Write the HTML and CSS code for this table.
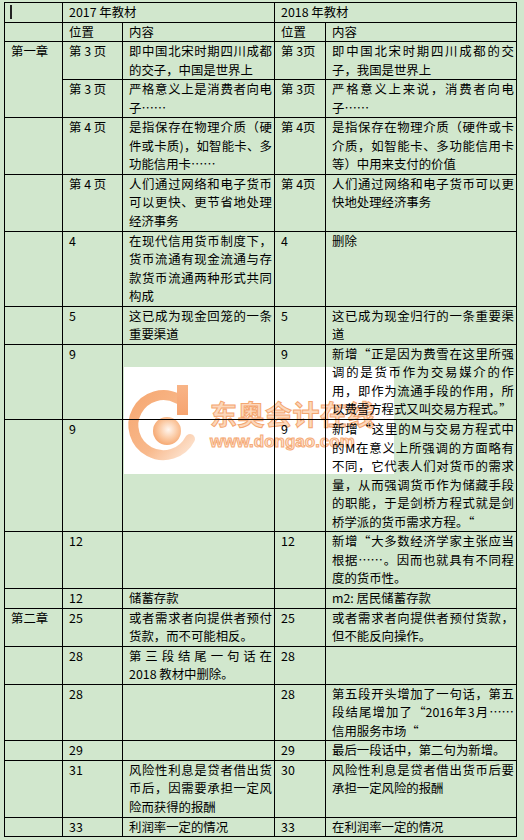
FILE: index.html
```html
<!DOCTYPE html>
<html lang="zh-CN">
<head>
<meta charset="utf-8">
<title>2017/2018 教材对比</title>
<link rel="stylesheet" href="styles.css">
</head>
<body>
<div class="page">
  <div class="watermark" aria-hidden="true">
    <svg width="270" height="107" viewBox="0 0 270 107">
      <defs>
        <linearGradient id="ring" x1="0" y1="0" x2="1" y2="1">
          <stop offset="0" stop-color="#f6a872"/>
          <stop offset="0.6" stop-color="#f8b98c"/>
          <stop offset="1" stop-color="#fde6d4"/>
        </linearGradient>
        <radialGradient id="ball" cx="0.55" cy="0.45" r="0.6">
          <stop offset="0" stop-color="#fff6ef"/>
          <stop offset="0.55" stop-color="#fbc9a2"/>
          <stop offset="1" stop-color="#f5a46c"/>
        </radialGradient>
        <linearGradient id="stem" x1="0" y1="0" x2="0" y2="1">
          <stop offset="0" stop-color="#f8b487"/>
          <stop offset="1" stop-color="#f6a470"/>
        </linearGradient>
      </defs>
      <path d="M 54 32 A 30 30 0 1 0 66 72" fill="none" stroke="url(#ring)" stroke-width="10" stroke-linecap="round"/>
      <rect x="53" y="18" width="11" height="30" fill="url(#stem)"/>
      <circle cx="43" cy="64" r="14" fill="url(#ball)"/>
      <text x="86" y="58" class="wm-cn">东奥会计在线</text>
      <text x="86" y="80" class="wm-en">www.dongao.com</text>
    </svg>
  </div>
  <table class="cmp">
    <colgroup>
      <col class="c-chap">
      <col class="c-pos">
      <col class="c-old">
      <col class="c-pos2">
      <col class="c-new">
    </colgroup>
    <tbody>
      <tr>
        <td><span class="caret"></span></td>
        <td colspan="2">2017 年教材</td>
        <td colspan="2">2018 年教材</td>
      </tr>
      <tr>
        <td></td>
        <td>位置</td>
        <td>内容</td>
        <td>位置</td>
        <td>内容</td>
      </tr>
      <tr>
        <td rowspan="2">第一章</td>
        <td>第 3 页</td>
        <td>即中国北宋时期四川成都的交子，中国是世界上</td>
        <td>第 3页</td>
        <td>即中国北宋时期四川成都的交子，我国是世界上</td>
      </tr>
      <tr>
        <td>第 3 页</td>
        <td>严格意义上是消费者向电子……</td>
        <td>第 3页</td>
        <td>严格意义上来说，消费者向电子……</td>
      </tr>
      <tr>
        <td></td>
        <td>第 4 页</td>
        <td>是指保存在物理介质（硬件或卡质)，如智能卡、多功能信用卡……</td>
        <td>第 4页</td>
        <td>是指保存在物理介质（硬件或卡介质，如智能卡、多功能信用卡等）中用来支付的价值</td>
      </tr>
      <tr>
        <td></td>
        <td>第 4 页</td>
        <td>人们通过网络和电子货币可以更快、更节省地处理经济事务</td>
        <td>第 4页</td>
        <td>人们通过网络和电子货币可以更快地处理经济事务</td>
      </tr>
      <tr>
        <td></td>
        <td>4</td>
        <td>在现代信用货币制度下，货币流通有现金流通与存款货币流通两种形式共同构成</td>
        <td>4</td>
        <td>删除</td>
      </tr>
      <tr>
        <td></td>
        <td>5</td>
        <td>这已成为现金回笼的一条重要渠道</td>
        <td>5</td>
        <td>这已成为现金归行的一条重要渠道</td>
      </tr>
      <tr>
        <td></td>
        <td>9</td>
        <td></td>
        <td>9</td>
        <td>新增“正是因为费雪在这里所强调的是货币作为交易媒介的作用，即作为流通手段的作用，所以费雪方程式又叫交易方程式。”</td>
      </tr>
      <tr>
        <td></td>
        <td>9</td>
        <td></td>
        <td>9</td>
        <td>新增“这里的M与交易方程式中的M在意义上所强调的方面略有不同，它代表人们对货币的需求量，从而强调货币作为储藏手段的职能，于是剑桥方程式就是剑桥学派的货币需求方程。“</td>
      </tr>
      <tr>
        <td></td>
        <td>12</td>
        <td></td>
        <td>12</td>
        <td>新增“大多数经济学家主张应当根据……。因而也就具有不同程度的货币性。</td>
      </tr>
      <tr>
        <td></td>
        <td>12</td>
        <td>储蓄存款</td>
        <td></td>
        <td>m2: 居民储蓄存款</td>
      </tr>
      <tr>
        <td>第二章</td>
        <td>25</td>
        <td>或者需求者向提供者预付货款，而不可能相反。</td>
        <td>25</td>
        <td>或者需求者向提供者预付货款，但不能反向操作。</td>
      </tr>
      <tr>
        <td></td>
        <td>28</td>
        <td>第三段结尾一句话在<span class="nw">2018 教材</span>中删除。</td>
        <td>28</td>
        <td></td>
      </tr>
      <tr>
        <td></td>
        <td>28</td>
        <td></td>
        <td>28</td>
        <td>第五段开头增加了一句话，第五段结尾增加了“2016年3月……信用服务市场“</td>
      </tr>
      <tr>
        <td></td>
        <td>29</td>
        <td></td>
        <td>29</td>
        <td>最后一段话中，第二句为新增。</td>
      </tr>
      <tr>
        <td></td>
        <td>31</td>
        <td>风险性利息是贷者借出货币后，因需要承担一定风险而获得的报酬</td>
        <td>30</td>
        <td>风险性利息是贷者借出货币后要承担一定风险的报酬</td>
      </tr>
      <tr>
        <td></td>
        <td>33</td>
        <td>利润率一定的情况</td>
        <td>33</td>
        <td>在利润率一定的情况</td>
      </tr>
    </tbody>
  </table>
</div>
</body>
</html>
```

FILE: styles.css
```css
html, body {
  margin: 0;
  padding: 0;
  background: #d1e7cd;
}

body {
  font-family: "Noto Sans CJK SC", "Noto Sans", sans-serif;
  font-size: 12.4px;
  color: #000;
}

.page {
  position: relative;
  width: 524px;
  height: 840px;
  overflow: hidden;
}

.watermark {
  position: absolute;
  left: 124px;
  top: 367px;
  width: 270px;
  height: 107px;
  background: #ffffff;
  z-index: 0;
}

.watermark svg {
  display: block;
}

.wm-cn {
  font-family: "Noto Sans CJK SC", sans-serif;
  font-size: 27px;
  font-weight: 700;
  letter-spacing: 0.5px;
  fill: #fcd8bc;
  stroke: #f4a771;
  stroke-width: 1;
}

.wm-en {
  font-family: "Liberation Sans", Arial, sans-serif;
  font-size: 17px;
  font-weight: 700;
  fill: #fde4d1;
  stroke: #f5ab78;
  stroke-width: 1;
}

.cmp {
  position: relative;
  z-index: 1;
  margin: 2px 0 0 4px;
  border-collapse: collapse;
  table-layout: fixed;
  width: 512px;
  border: 1px solid #000;
  background: transparent;
}

.c-chap { width: 58px; }
.c-pos  { width: 60px; }
.c-old  { width: 152px; }
.c-pos2 { width: 51px; }
.c-new  { width: 191px; }

.cmp td {
  border: 1px solid #000;
  padding: 0 2px 0 6px;
  vertical-align: top;
  line-height: 18.55px;
  text-align: justify;
  word-wrap: break-word;
}

.caret {
  display: inline-block;
  width: 2px;
  height: 14px;
  background: #222;
  vertical-align: -2px;
  margin-left: -1px;
}

.nw {
  white-space: nowrap;
}
```
